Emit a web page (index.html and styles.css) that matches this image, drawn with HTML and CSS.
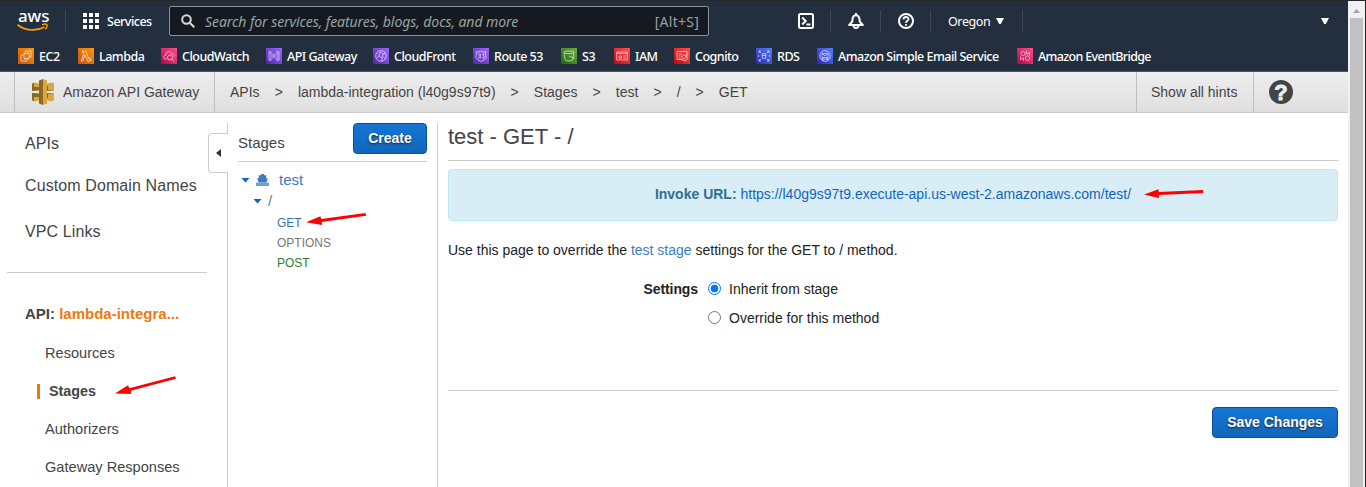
FILE: index.html
```html
<!DOCTYPE html>
<html lang="en">
<head>
<meta charset="utf-8">
<title>API Gateway</title>
<link rel="stylesheet" href="styles.css">
</head>
<body>
<div class="window">
<div class="page">
  <header class="topnav">
    <div class="bar">
      <div class="aws">
        <span>aws</span>
        <svg width="32" height="9" viewBox="0 0 32 9" fill="none" stroke="#f90"><path d="M.5 1.700C8 8 20 8.300 27.500 4" stroke-width="1.900"/><path d="M25 1.800c2-.8 4.300-.8 5 0 .3 1.500-.5 3.500-1.700 4.700" stroke-width="1.400"/></svg>
      </div>
      <span class="sep"></span>
      <svg class="grid" width="16" height="16" fill="#fff"><path d="M0 0h4v4H0zM6 0h4v4H6zM12 0h4v4h-4zM0 6h4v4H0zM6 6h4v4H6zM12 6h4v4h-4zM0 12h4v4H0zM6 12h4v4H6zM12 12h4v4h-4z"/></svg>
      <span class="services">Services</span>
      <div class="search">
        <svg width="14" height="14" viewBox="0 0 14 14" fill="none" stroke="#d5dbdb" stroke-width="2"><circle cx="5.500" cy="5.500" r="4.300"/><path d="M8.700 8.700l4.600 4.600"/></svg>
        <span class="hint">Search for services, features, blogs, docs, and more</span>
        <span class="keys">[Alt+S]</span>
      </div>
      <div class="tools">
        <span class="tool"><svg width="16" height="16" fill="none" stroke="#fff" stroke-width="2"><rect x="1" y="1" width="14" height="14" rx="1.500"/><path d="M4.200 4.500L7.700 8l-3.500 3.500M8.500 11.500h4"/></svg></span>
        <span class="tool"><svg width="16" height="16" fill="none" stroke="#fff" stroke-width="2" stroke-linejoin="round"><path d="M1.200 12h13.600L11.700 8.500C11.700 4.500 10.500 2.300 8 2.300S4.300 4.500 4.300 8.500z"/><path d="M8 0v2M5.500 12.500c.3 3.300 4.700 3.300 5 0"/></svg></span>
        <span class="tool"><svg width="16" height="16" fill="none" stroke="#fff" stroke-width="2"><circle cx="8" cy="8" r="7"/><path d="M5.500 6.500c0-3.300 5-3.300 5-.3C10.500 8 8 7.700 8 10M8 11v1.800" stroke-width="1.800"/></svg></span>
        <span class="region"><span>Oregon</span><i class="caret"></i></span>
      </div>
      <i class="caret account"></i>
    </div>
    <nav class="favs">
      <span class="fav f-ec2"><svg class="orange" viewBox="0 0 16 16"><path d="M6 5.500h5v5H6zM4.500 7.500H3V13h5.500v-1.500M7.500 4V3H13v5.500h-1M7 4v1M10 4v1M7 11v1M10 11v1M4.500 6.500h1M11.500 9.500h1"/></svg><b>EC2</b></span>
      <span class="fav f-lambda"><svg class="orange" viewBox="0 0 16 16"><path d="M4.500 3h3l3.500 8 1.500-.6.500 2-3 1L7 7 4.800 13H3l3-7-.5-1.500h-1z"/></svg><b>Lambda</b></span>
      <span class="fav f-cw"><svg class="pink" viewBox="0 0 16 16"><path d="M6 11H4c-2-.5-1.500-3.500.5-3.500C4.500 3 10 2.500 11 6c2 0 2.700 1 2.500 2.500"/><circle cx="9" cy="9.500" r="2.500"/><path d="M11 11.500l2.300 2"/></svg><b>CloudWatch</b></span>
      <span class="fav f-api"><svg class="purple" viewBox="0 0 16 16"><path d="M5 3.500L3 4v8l2 .5zM11 3.500l2 .5v8l-2 .5zM7 5.500v5M9.300 5.500L8 8l1.300 2.500"/></svg><b>API Gateway</b></span>
      <span class="fav f-cf"><svg class="purple" viewBox="0 0 16 16"><circle cx="8" cy="8" r="5.300"/><path d="M3.500 10.500L6 8l1-4 3 2-1 4-3-2M9 10v3M10 6l2.500-1M10.300 9l2 1.500"/></svg><b>CloudFront</b></span>
      <span class="fav f-r53"><svg class="purple" viewBox="0 0 16 16"><path d="M3 3.500l2 .7L8 3l3 1.200 2-.7-.4 2.500.7 3.500L11 12l-3 1.500L5 12 2.700 9.500 3.400 6z"/><path d="M5 6h2.300v2H5.500M7.300 8v2H5M8.800 6h2.400l-1.200 1.500 1.200.5v2H8.800"/></svg><b>Route 53</b></span>
      <span class="fav f-s3"><svg class="green" viewBox="0 0 16 16"><ellipse cx="8" cy="4.300" rx="5" ry="1.300"/><path d="M3 4.500L4.200 12c1.500 1.300 6 1.300 7.500 0L13 4.500M8 8l5.500 2.300"/></svg><b>S3</b></span>
      <span class="fav f-iam"><svg class="red" viewBox="0 0 16 16"><path d="M2.700 4h10.600v8H2.700zM3 5.500h10M5 8h2.500v2.300H5zM9.300 8H12M9.300 10H12"/></svg><b>IAM</b></span>
      <span class="fav f-cog"><svg class="red" viewBox="0 0 16 16"><path d="M8 11.500H3v-8h10V7M4.500 6H8M4.500 8h2.500M4.500 10h2"/><circle cx="10.500" cy="10" r="2.800"/><path d="M9 10l1.200 1.200L14 5.500"/></svg><b>Cognito</b></span>
      <span class="fav f-rds"><svg class="blue" viewBox="0 0 16 16"><path d="M3 5V3h2M11 3h2v2M13 11v2h-2M5 13H3v-2M3 3l2 2M13 3l-2 2M13 13l-2-2M3 13l2-2M2.500 7v2M13.500 7v2"/><path d="M6.300 5.700h3.400v4.600H6.300zM6.300 7.500h3.400"/></svg><b>RDS</b></span>
      <span class="fav f-ses"><svg class="blue" viewBox="0 0 16 16"><circle cx="8" cy="8" r="5.300"/><path d="M5 5.500h6v4H5zM5 5.500l3 2.300 3-2.300M4 11h8M6 12.500V10M10 12.500V10"/></svg><b>Amazon Simple Email Service</b></span>
      <span class="fav f-eb"><svg class="pink" viewBox="0 0 16 16"><path d="M4 4.500l2-1.300L8 4.500v2L6 8 4 6.500zM8.500 9l2-1.300 2 1.300v2.300l-2 1.300-2-1.300zM9.500 3v3l3-1.500v3M6.500 13v-3l-3 1.500v-3"/></svg><b>Amazon EventBridge</b></span>
    </nav>
  </header>

  <div class="crumbbar">
    <div class="brand">
      <svg width="22" height="26" viewBox="0 0 22 26">
        <path fill="#d9a741" d="M2 3.500l5 1V7h8V4.500l5-1 2 1V12H0V7h2zM0 14h22v7l-2 1.500-5-1V19H7v2.500l-5 1z"/>
        <path fill="#876929" d="M0 4.700l2-1.200V8h5v3L0 12zM0 14h2l6 1v3H2v4.500L0 21.300zM15 7h1v4h-1zM15 15h1v4h-1zM15 11l7 1h-7zM15 14h7l-7 1z"/>
        <path fill="#876929" d="M7 1.500L11 0v26l-4-1.500z"/>
        <path fill="#d9a741" d="M11 0l4 1.500v23L11 26z"/>
      </svg>
      <span>Amazon API Gateway</span>
    </div>
    <div class="crumbs"><span>APIs</span><i>&gt;</i><span>lambda-integration (l40g9s97t9)</span><i>&gt;</i><span>Stages</span><i>&gt;</i><span>test</span><i>&gt;</i><span>/</span><i>&gt;</i><span>GET</span></div>
    <div class="hints">Show all hints</div>
    <div class="help"><span>?</span></div>
  </div>

  <main class="columns">
    <aside class="side">
      <div class="side-top">
        <a>APIs</a>
        <a class="domains">Custom Domain Names</a>
        <a>VPC Links</a>
      </div>
      <div class="side-api">API: <span>lambda-integra...</span></div>
      <a class="sub">Resources</a>
      <a class="sub current">Stages</a>
      <a class="sub">Authorizers</a>
      <a class="sub">Gateway Responses</a>
      <div class="collapse"><i></i></div>
    </aside>

    <section class="stages">
      <div class="stages-head"><span>Stages</span><button class="btn create">Create</button></div>
      <div class="node root"><i class="open"></i>
        <svg width="13" height="12" viewBox="0 0 13 12" fill="#3b7cc4"><path d="M5 0h3v1.200h2.200V4l1.600.8-1.400 3.700H2.600L1.200 4.800 2.800 4V1.200H5z"/><path d="M0 9l1.500-.7L3 9l1.700-.7 1.800.7 1.800-.7L10 9l1.500-.7L13 9v3H0z" opacity=".75"/></svg>
        <span>test</span></div>
      <div class="node path"><i class="open"></i><span>/</span></div>
      <ul class="methods"><li class="get">GET</li><li class="options">OPTIONS</li><li class="post">POST</li></ul>
    </section>

    <section class="detail">
      <h1>test - GET - /</h1>
      <div class="invoke"><b>Invoke URL:</b> <a>https://l40g9s97t9.execute-api.us-west-2.amazonaws.com/test/</a></div>
      <p>Use this page to override the <a>test stage</a> settings for the GET to / method.</p>
      <div class="settings">
        <b>Settings</b>
        <div class="choices">
          <label><i class="radio on"></i>Inherit from stage</label>
          <label><i class="radio"></i>Override for this method</label>
        </div>
      </div>
      <div class="actions"><button class="btn save">Save Changes</button></div>
    </section>
  </main>
</div>
<div class="scroll"><i class="up"></i><div class="thumb"></div></div>
</div>
<svg class="marks" width="1366" height="487" fill="#fe0000" stroke="none">
  <path d="M115 393.500l13-8.200 1.300 3L175 376.200l1 2.600-45.300 12 .3 3.200z"/>
  <path d="M306 222.300l14.500-6 .6 2.700L365.500 213l.5 2.700-44.300 6.300.3 3z"/>
  <path d="M1144 194.500l14.500-5.300.2 2.800 44.300-2 .3 2.900-44.500 2.200.2 3z"/>
</svg>
</body>
</html>
```
FILE: styles.css
```css
* { box-sizing: border-box; }
body { margin: 0; background: #fff; font-family: "Liberation Sans", Arial, sans-serif; font-size: 14px; color: #444; overflow: hidden; }
i { font-style: normal; }
svg { display: block; flex: none; }

.window { display: flex; height: 487px; border-top: 1px solid #262626; border-right: 1px solid #262626; }
.page { flex: 1; min-width: 0; display: flex; flex-direction: column; }

/* console navigation */
.topnav { height: 71px; background: #232f3e; border-bottom: 1px solid #4c5566; color: #fff; font-family: "Noto Sans", sans-serif; font-size: 12.5px; flex: none; }
.bar { display: flex; align-items: center; height: 40px; padding-left: 17px; }
.aws { width: 32px; height: 22px; }
.aws span { display: block; height: 13px; padding-left: 1px; font: 500 17px/11px "Noto Sans", sans-serif; letter-spacing: -.1px; }
.sep { width: 1px; height: 22px; background: #414750; margin-left: 16px; }
.grid { margin-left: 17px; }
.services { width: 62px; margin-left: 8px; font-weight: 500; letter-spacing: -.5px; white-space: nowrap; }
.search { display: flex; align-items: center; width: 540px; height: 30px; padding: 0 9px 0 11px; background: #16191f; border: 1px solid #879596; border-radius: 2px; color: #95a5a6; }
.hint { flex: 1; margin-left: 10px; font-style: italic; font-size: 14px; letter-spacing: -.07px; white-space: nowrap; }
.keys { font-size: 14px; letter-spacing: .25px; }
.tools { display: flex; align-items: center; margin-left: 72px; }
.tool { display: flex; align-items: center; justify-content: center; width: 50px; height: 22px; border-right: 1px solid #414750; }
.region { display: flex; align-items: center; width: 92px; height: 22px; padding-left: 17px; border-right: 1px solid #414750; letter-spacing: -.4px; }
.region > span { width: 42px; }
.caret { width: 8px; height: 6px; background: #fff; clip-path: polygon(0 0, 100% 0, 60% 100%, 40% 100%); margin-left: 6px; }
.account { margin: 0 19px 0 auto; }

.favs { display: flex; align-items: center; height: 30px; padding-left: 18px; }
.fav { display: flex; align-items: center; flex: none; white-space: nowrap; }
.fav svg { width: 16px; height: 16px; margin-right: 5px; fill: none; stroke: #fff; stroke-width: .7; stroke-opacity: .85; }
.fav b { font-weight: 500; letter-spacing: -.5px; }
.fav.f-eb b { letter-spacing: -.66px; }
.orange { background: linear-gradient(45deg, #c8511b, #f90); }
.pink { background: linear-gradient(45deg, #b0084d, #ff4f8b); }
.purple { background: linear-gradient(45deg, #4d27a8, #a166ff); }
.green { background: linear-gradient(45deg, #1b660f, #6cae3e); }
.red { background: linear-gradient(45deg, #bd0816, #ff5252); }
.blue { background: linear-gradient(45deg, #2e27ad, #527fff); }
.f-ec2 { width: 60px; }
.f-lambda { width: 83px; }
.f-cw { width: 105px; }
.f-api { width: 107px; }
.f-cf { width: 100px; }
.f-r53 { width: 88px; }
.f-s3 { width: 53px; }
.f-iam { width: 60px; }
.f-cog { width: 82px; }
.f-rds { width: 61px; }
.f-ses { width: 200px; }

/* breadcrumb bar */
.crumbbar { display: flex; height: 41px; flex: none; padding-left: 14px; background: linear-gradient(#eee, #dfdfdf); border-bottom: 1px solid #ccc; line-height: 40px; white-space: nowrap; }
.brand { display: flex; align-items: center; width: 201px; padding-left: 17px; border: solid #bfbfbf; border-width: 0 1px; }
.brand svg { margin-right: 9px; }
.crumbs { flex: 1; padding-left: 15px; }
.crumbs i { display: inline-block; width: 38.3px; text-align: center; }
.hints { width: 118px; padding-left: 14px; border: solid #bfbfbf; border-width: 0 1px; }
.help { display: flex; align-items: center; width: 94px; padding-left: 15px; }
.help span { width: 24px; height: 24px; border-radius: 50%; background: #444; color: #eee; font-size: 22px; font-weight: 700; line-height: 25px; text-align: center; -webkit-text-stroke: .9px #eee; }

/* page columns */
.columns { display: flex; flex: 1; min-height: 0; }
.side { position: relative; display: flex; flex-direction: column; width: 228px; border-right: 1px solid #ccc; margin-top: 10px; }
.side-top { width: 200px; height: 150px; margin-left: 7px; padding: 9px 0 0 18px; border-bottom: 1px solid #ccc; font-size: 16px; line-height: 24px; letter-spacing: .1px; white-space: nowrap; }
.side-top a { display: block; margin-bottom: 18px; }
.side-top .domains { margin-bottom: 22px; }
.side-api { margin: 32px 0 0 25px; font-size: 15px; font-weight: 700; line-height: 18px; }
.side-api span { color: #eb7a12; }
.sub { margin-left: 45px; margin-top: 23px; font-size: 14.6px; line-height: 15px; }
.current { margin-left: 37px; padding-left: 9px; border-left: 3px solid #e47911; font-weight: 700; font-size: 14.3px; }
.collapse { position: absolute; right: -1px; top: 10px; width: 20px; height: 40px; background: #fff; border: 1px solid #ccc; border-right: 0; border-radius: 4px 0 0 4px; }
.collapse i { display: block; width: 5px; height: 8px; margin: 15px 0 0 7px; background: #333; clip-path: polygon(100% 0, 100% 100%, 0 50%); }

.stages { width: 210px; margin-top: 10px; padding: 0 10px; border-right: 1px solid #ccc; }
.stages-head { display: flex; align-items: center; justify-content: space-between; height: 39px; padding-bottom: 7px; border-bottom: 1px solid #ccc; font-size: 15px; }
.stages-head span { margin-top: 8px; }
.btn { height: 31px; padding: 0 0 2px; border: 1px solid #0a4f94; border-radius: 4px; background: linear-gradient(#1476d6, #1166bb); color: #fff; font: 700 14px "Liberation Sans", Arial, sans-serif; text-shadow: 0 1px 2px #222; }
.create { width: 74px; }
.node { display: flex; align-items: center; }
.open { width: 9px; height: 5px; background: #1166bb; clip-path: polygon(0 0, 100% 0, 50% 100%); }
.root { height: 20px; margin-top: 8px; padding-left: 3px; font-size: 15px; color: #3b7cc4; }
.root svg { margin: 0 10px 0 6px; }
.root span { padding-bottom: 2px; }
.path { height: 22px; padding-left: 15px; }
.path span { margin-left: 5px; padding: 0 0 2px 1px; font-size: 15px; color: #777; }
.methods { list-style: none; margin: 0; padding: 1px 0 0 39px; font-size: 12px; line-height: 20px; }
.get { color: #3b73af; }
.options { color: #777; }
.post { color: #2e7d32; }

.detail { flex: 1; padding: 10px 10px 0; }
.detail h1 { height: 38px; margin: 0; font-size: 22px; font-weight: 400; line-height: 27px; border-bottom: 1px solid #ccc; }
.invoke { height: 52px; margin-top: 8px; border: 1px solid #bce8f1; border-radius: 4px; background: #d9edf7; text-align: center; line-height: 48px; color: #31708f; }
.invoke a { color: #1166bb; }
.detail p { margin: 18px 0 0; line-height: 22px; color: #222; }
.detail p a { color: #3b7cc4; }
.settings { display: flex; height: 130px; padding-top: 18px; color: #222; line-height: 20px; border-bottom: 1px solid #ccc; }
.settings > b { width: 250px; text-align: right; letter-spacing: -.1px; }
.choices { margin-left: 10px; }
.choices label { display: flex; align-items: center; height: 20px; margin-bottom: 9px; }
.radio { width: 13px; height: 13px; margin: -1px 8px 0 0; border: 1px solid #767676; border-radius: 50%; background: #fff; }
.on { border-color: #0075ff; background: radial-gradient(circle, #0075ff 3.5px, #fff 4.2px); }
.actions { display: flex; justify-content: flex-end; padding-top: 16px; }
.save { width: 126px; }

.scroll { width: 17px; flex: none; padding: 8px 2px 0; background: #f1f1f1; display: flex; flex-direction: column; align-items: center; }
.up { width: 7px; height: 4px; flex: none; margin-bottom: 5px; background: #a3a3a3; clip-path: polygon(50% 0, 100% 100%, 0 100%); }
.thumb { flex: 1; width: 13px; background: #c1c1c1; }

/* annotation arrows drawn over the page */
.marks { position: absolute; left: 0; top: 0; pointer-events: none; }
```
